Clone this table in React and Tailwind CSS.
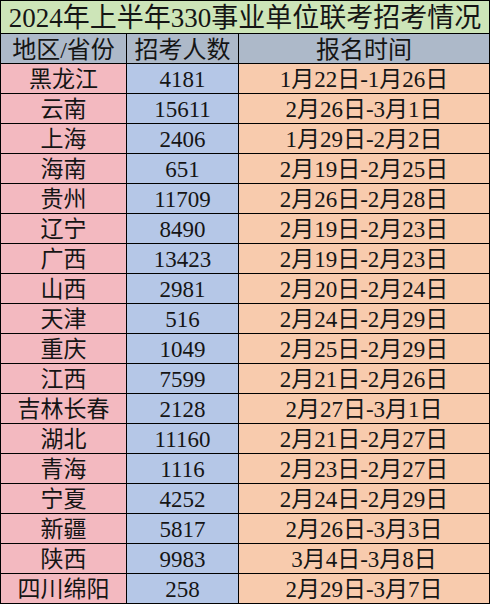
import React from "react";

const rows = [
  ["黑龙江", "4181", "1月22日-1月26日"],
  ["云南", "15611", "2月26日-3月1日"],
  ["上海", "2406", "1月29日-2月2日"],
  ["海南", "651", "2月19日-2月25日"],
  ["贵州", "11709", "2月26日-2月28日"],
  ["辽宁", "8490", "2月19日-2月23日"],
  ["广西", "13423", "2月19日-2月23日"],
  ["山西", "2981", "2月20日-2月24日"],
  ["天津", "516", "2月24日-2月29日"],
  ["重庆", "1049", "2月25日-2月29日"],
  ["江西", "7599", "2月21日-2月26日"],
  ["吉林长春", "2128", "2月27日-3月1日"],
  ["湖北", "11160", "2月21日-2月27日"],
  ["青海", "1116", "2月23日-2月27日"],
  ["宁夏", "4252", "2月24日-2月29日"],
  ["新疆", "5817", "2月26日-3月3日"],
  ["陕西", "9983", "3月4日-3月8日"],
  ["四川绵阳", "258", "2月29日-3月7日"],
];

const cell = "flex items-center justify-center border-r border-b border-black h-[30px] pt-[2px] text-[23px] leading-none whitespace-nowrap";

export default function App() {
  return (
    <div className="w-[490px] h-[605px] overflow-hidden bg-white text-[#151515] font-['Liberation_Serif','Noto_Sans_CJK_SC',serif]">
      <div className="grid grid-cols-[126px_112px_251px] border-l border-t border-black">
        {/* title */}
        <div className="col-span-3 flex items-center justify-center h-[33px] pt-[2px] border-r border-b border-black bg-[#cde5b8] text-[27px] leading-none whitespace-nowrap">
          2024年上半年330事业单位联考招考情况
        </div>

        {/* header */}
        <div className={cell + " bg-[#adb9c9] text-[24px]"}>地区/省份</div>
        <div className={cell + " bg-[#adb9c9] text-[24px]"}>招考人数</div>
        <div className={cell + " bg-[#adb9c9] text-[24px]"}>报名时间</div>

        {rows.map(([area, num, date]) => (
          <React.Fragment key={area}>
            <div className={cell + " bg-[#f3b9c0]"}>{area}</div>
            <div className={cell + " bg-[#b5c7e7]"}>{num}</div>
            <div className={cell + " bg-[#f8cbad]"}>{date}</div>
          </React.Fragment>
        ))}
      </div>
    </div>
  );
}
